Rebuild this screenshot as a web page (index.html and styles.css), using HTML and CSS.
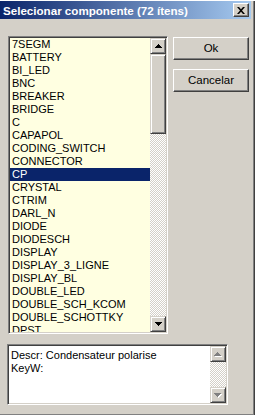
FILE: index.html
```html
<!DOCTYPE html>
<html lang="pt">
<head>
  <meta charset="UTF-8">
  <title>Selecionar componente</title>
  <link rel="stylesheet" href="styles.css">
</head>
<body>
  <div class="window">
    <div class="titlebar">
      <span class="title">Selecionar componente (72 ítens)</span>
      <span class="close">
        <svg width="8" height="7" viewBox="0 0 8 7"><path d="M0 0h2l2 2.2L6 0h2L5 3.5 8 7H6L4 4.8 2 7H0l3-3.5z" fill="#000"/></svg>
      </span>
    </div>

    <div class="body">
      <div class="top">
        <div class="listbox">
          <ul class="items">
            <li>7SEGM</li>
            <li>BATTERY</li>
            <li>BI_LED</li>
            <li>BNC</li>
            <li>BREAKER</li>
            <li>BRIDGE</li>
            <li>C</li>
            <li>CAPAPOL</li>
            <li>CODING_SWITCH</li>
            <li>CONNECTOR</li>
            <li class="sel">CP</li>
            <li>CRYSTAL</li>
            <li>CTRIM</li>
            <li>DARL_N</li>
            <li>DIODE</li>
            <li>DIODESCH</li>
            <li>DISPLAY</li>
            <li>DISPLAY_3_LIGNE</li>
            <li>DISPLAY_BL</li>
            <li>DOUBLE_LED</li>
            <li>DOUBLE_SCH_KCOM</li>
            <li>DOUBLE_SCHOTTKY</li>
            <li>DPST</li>
          </ul>
          <div class="vscroll">
            <span class="sbtn">
              <svg width="7" height="4" viewBox="0 0 7 4"><path d="M3 0h1v1h1v1h1v1h1v1H0V3h1V2h1V1h1z" fill="#000"/></svg>
            </span>
            <span class="thumb"></span>
            <span class="track"></span>
            <span class="sbtn">
              <svg width="7" height="4" viewBox="0 0 7 4"><path d="M0 0h7v1H6v1H5v1H4v1H3V3H2V2H1V1H0z" fill="#000"/></svg>
            </span>
          </div>
        </div>

        <div class="actions">
          <button class="btn">Ok</button>
          <button class="btn">Cancelar</button>
        </div>
      </div>

      <div class="descr">
        <div class="descr-text">Descr: Condensateur polarise<br>KeyW:</div>
        <div class="vscroll">
          <span class="sbtn">
            <svg width="8" height="5" viewBox="0 0 8 5"><path d="M4 1h1v1h1v1h1v1h1v1H1V4h1V3h1V2h1z" fill="#fff"/><path d="M3 0h1v1h1v1h1v1h1v1H0V3h1V2h1V1h1z" fill="#808080"/></svg>
          </span>
          <span class="track"></span>
          <span class="sbtn">
            <svg width="8" height="5" viewBox="0 0 8 5"><path d="M1 1h7v1H7v1H6v1H5v1H4V4H3V3H2V2H1z" fill="#fff"/><path d="M0 0h7v1H6v1H5v1H4v1H3V3H2V2H1V1H0z" fill="#808080"/></svg>
          </span>
        </div>
      </div>
    </div>
  </div>
</body>
</html>
```

FILE: styles.css
```css
body {
  margin: 0;
  font-family: "Liberation Sans", Arial, sans-serif;
  font-size: 11px;
  color: #000;
}
.window {
  width: 255px;
  height: 415px;
  box-sizing: border-box;
  padding-right: 4px;
  background: #d4d0c8;
  box-shadow: inset -1px -1px #404040, inset -2px -2px #808080;
}
.titlebar {
  height: 18px;
  margin-top: 1px;
  padding: 0 2px 0 3px;
  display: flex;
  align-items: center;
  justify-content: space-between;
  background: linear-gradient(to right, #0a246a, #a6caf0);
  color: #fff;
  font-weight: bold;
  font-size: 11.6px;
}
.close {
  width: 16px;
  height: 14px;
  box-sizing: border-box;
  display: flex;
  align-items: center;
  justify-content: center;
  background: #d4d0c8;
  border: 1px solid;
  border-color: #fff #404040 #404040 #fff;
  box-shadow: inset -1px -1px #808080;
}
.body {
  padding: 17px 0 0 7px;
}
.top {
  display: flex;
  align-items: flex-start;
  gap: 5px;
}
.listbox {
  margin-left: 1px;
  width: 160px;
  height: 298px;
  box-sizing: border-box;
  display: flex;
  background: #ffffe1;
  border: 1px solid;
  border-color: #808080 #fff #fff #808080;
  box-shadow: inset 1px 1px #404040, inset -1px -1px #d4d0c8;
  padding: 1px;
}
.items {
  flex: 1;
  margin: 0;
  padding: 0;
  list-style: none;
  overflow: hidden;
}
.items li {
  height: 13px;
  line-height: 13px;
  padding-left: 2px;
  white-space: nowrap;
}
.items li.sel {
  background: #0a246a;
  color: #fff;
}
.vscroll {
  width: 16px;
  flex: none;
  display: flex;
  flex-direction: column;
  background: repeating-conic-gradient(#d4d0c8 0 25%, #fff 0 50%) 0 0 / 2px 2px;
}
.sbtn, .thumb {
  flex: none;
  box-sizing: border-box;
  background: #d4d0c8;
  border: 1px solid;
  border-color: #d4d0c8 #404040 #404040 #d4d0c8;
  box-shadow: inset 1px 1px #fff, inset -1px -1px #808080;
}
.sbtn {
  height: 16px;
  display: flex;
  align-items: center;
  justify-content: center;
}
.thumb {
  height: 80px;
}
.track {
  flex: 1;
}
.actions {
  margin-top: 1px;
  display: flex;
  flex-direction: column;
  gap: 9px;
}
.btn {
  width: 76px;
  height: 23px;
  box-sizing: border-box;
  padding: 0 0 2px;
  font-family: "Liberation Sans", Arial, sans-serif;
  font-size: 11.5px;
  color: #000;
  background: #d4d0c8;
  border: 1px solid;
  border-color: #fff #404040 #404040 #fff;
  box-shadow: inset -1px -1px #808080;
}
.descr {
  margin-top: 10px;
  width: 221px;
  height: 61px;
  box-sizing: border-box;
  display: flex;
  background: #fff;
  border: 1px solid;
  border-color: #808080 #fff #fff #808080;
  box-shadow: inset 1px 1px #404040, inset -1px -1px #d4d0c8;
  padding: 1px;
}
.descr-text {
  flex: 1;
  padding: 3px 0 0 2px;
  line-height: 13px;
}
```
